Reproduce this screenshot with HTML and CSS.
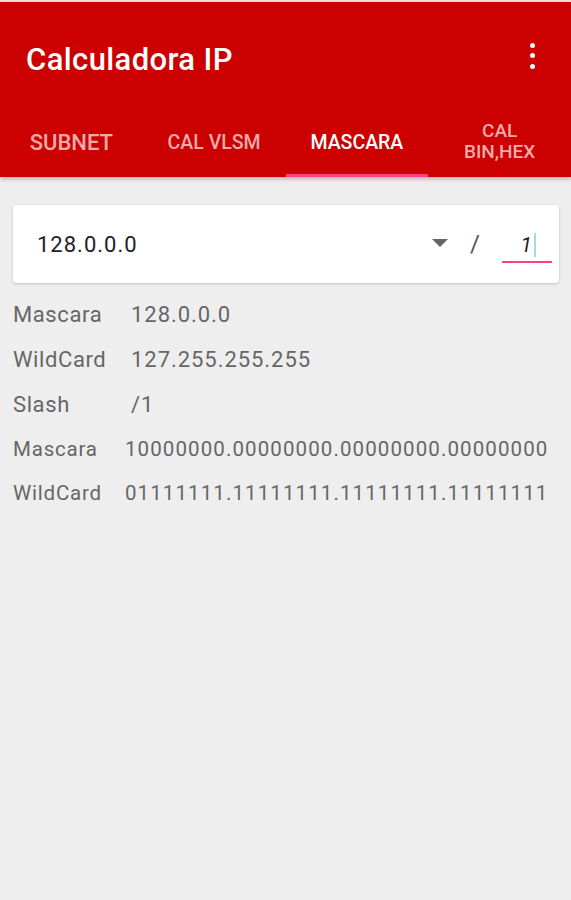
FILE: index.html
```html
<!DOCTYPE html>
<html>
<head>
<meta charset="utf-8">
<link rel="stylesheet" href="styles.css">
</head>
<body>
<div class="strip"></div>
<header class="appbar">
  <div class="toolbar">
    <h1 class="title">Calculadora IP</h1>
    <div class="menu"><span class="dot"></span><span class="dot"></span><span class="dot"></span></div>
  </div>
  <nav class="tabs">
    <div class="tab first">SUBNET</div>
    <div class="tab">CAL VLSM</div>
    <div class="tab active">MASCARA</div>
    <div class="tab two">CAL<br>BIN,HEX</div>
  </nav>
</header>
<main class="content">
  <div class="card">
    <div class="ip">128.0.0.0</div>
    <svg class="caret" width="16" height="8" viewBox="0 0 16 8"><path d="M0 0 L16 0 L8 8 Z" fill="#666"/></svg>
    <div class="sep">/</div>
    <div class="prefix"><span class="num">1</span><span class="cursor"></span></div>
  </div>
  <div class="results">
    <div class="row"><span class="lbl">Mascara</span><span class="val">128.0.0.0</span></div>
    <div class="row"><span class="lbl">WildCard</span><span class="val">127.255.255.255</span></div>
    <div class="row"><span class="lbl">Slash</span><span class="val">/1</span></div>
    <div class="row bin"><span class="lbl">Mascara</span><span class="val">10000000.00000000.00000000.00000000</span></div>
    <div class="row bin"><span class="lbl">WildCard</span><span class="val">01111111.11111111.11111111.11111111</span></div>
  </div>
</main>
</body>
</html>
```

FILE: styles.css
```css
html, body {
  margin: 0;
  padding: 0;
}
body {
  background: #eeeeee;
  font-family: Roboto, "Noto Sans", sans-serif;
  width: 571px;
  height: 900px;
  overflow: hidden;
}
.strip {
  height: 2px;
  background: #f3dcdc;
}
.appbar {
  background: #cc0000;
  box-shadow: 0 2px 4px rgba(0,0,0,0.25);
  position: relative;
}
.toolbar {
  height: 108px;
  display: flex;
  align-items: center;
  padding: 7px 0 0 26px;
  box-sizing: border-box;
}
.title {
  margin: 0;
  flex: 1;
  color: #fff;
  font-size: 31px;
  font-weight: 500;
  letter-spacing: 0.4px;
}
.menu {
  width: 60px;
  display: flex;
  flex-direction: column;
  align-items: center;
  gap: 5.5px;
  margin-right: 9px;
  margin-top: -8px;
}
.dot {
  width: 5px;
  height: 5px;
  border-radius: 50%;
  background: #fff;
}
.tabs {
  display: grid;
  grid-template-columns: repeat(4, 1fr);
  height: 67px;
}
.tab {
  display: flex;
  align-items: center;
  justify-content: center;
  text-align: center;
  color: #f2aaaa;
  font-size: 19.5px;
  font-weight: 500;
  padding-top: 1px;
  box-sizing: border-box;
  border-bottom: 3px solid transparent;
}
.tab.first {
  font-size: 22px;
}
.tab.two {
  font-size: 19px;
  line-height: 21px;
  padding-top: 0;
  padding-bottom: 3px;
}
.tab.active {
  color: #fff;
  border-bottom-color: #ff4081;
}
.content {
  padding: 28px 12px 0 13px;
}
.card {
  height: 78px;
  background: #fff;
  border-radius: 3px;
  box-shadow: 0 1px 3px rgba(0,0,0,0.2);
  display: flex;
  align-items: center;
  padding: 0 7px 0 24px;
}
.ip {
  flex: 1;
  font-size: 22px;
  color: #222;
  letter-spacing: 1px;
}
.caret {
  margin-right: 22px;
  margin-top: -2px;
}
.sep {
  font-size: 24px;
  color: #555;
  margin-right: 22px;
}
.prefix {
  width: 50px;
  height: 34px;
  border-bottom: 2px solid #ff4081;
  display: flex;
  justify-content: flex-end;
  align-items: center;
  padding-right: 16px;
  box-sizing: border-box;
  margin-top: 4px;
}
.num {
  font-size: 21px;
  color: #222;
  font-style: italic;
}
.cursor {
  width: 2px;
  height: 24px;
  background: #a8d8e8;
  margin-left: 2px;
}
.results {
  margin-top: 9px;
}
.row {
  height: 45px;
  display: flex;
  align-items: center;
  color: #666;
  font-size: 22px;
  letter-spacing: 0.6px;
}
.lbl {
  width: 118px;
}
.row .val {
  letter-spacing: 0.95px;
}
.row.bin {
  height: 44px;
  font-size: 20.5px;
  letter-spacing: 0.8px;
}
.row.bin .lbl {
  width: 112px;
}
.row.bin .val {
  letter-spacing: 1.1px;
}
```
